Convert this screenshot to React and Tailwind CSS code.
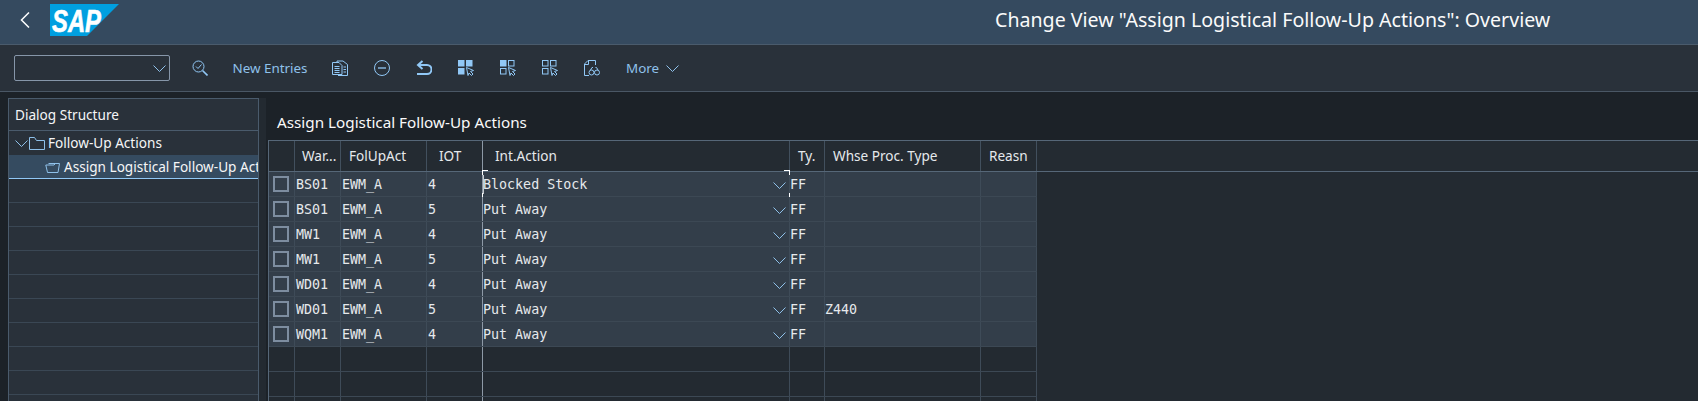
const SANS = "font-['Noto_Sans',sans-serif]"
const MONO = "font-['DejaVu_Sans_Mono',monospace]"

const COLUMNS = [
  { label: '', width: 'w-[26px]', head: 'pl-0', cell: 'pl-0', key: 'sel' },
  { label: 'War...', width: 'w-[46px]', head: 'pl-[7px]', cell: 'pl-[1px]', key: 'war' },
  { label: 'FolUpAct', width: 'w-[86px]', head: 'pl-[8px]', cell: 'pl-[1px]', key: 'act' },
  { label: 'IOT', width: 'w-[56px]', head: 'pl-[12px]', cell: 'pl-[1px]', key: 'iot' },
  { label: 'Int.Action', width: 'w-[307px]', head: 'pl-[12px]', cell: 'pl-0', key: 'action' },
  { label: 'Ty.', width: 'w-[35px]', head: 'pl-[8px]', cell: 'pl-0', key: 'ty' },
  { label: 'Whse Proc. Type', width: 'w-[156px]', head: 'pl-[8px]', cell: 'pl-0', key: 'whse' },
  { label: 'Reasn', width: 'w-[56px]', head: 'pl-[8px]', cell: 'pl-0', key: 'reason' },
]

const ROWS = [
  { war: 'BS01', act: 'EWM_A', iot: '4', action: 'Blocked Stock', ty: 'FF', whse: '', reason: '' },
  { war: 'BS01', act: 'EWM_A', iot: '5', action: 'Put Away', ty: 'FF', whse: '', reason: '' },
  { war: 'MW1', act: 'EWM_A', iot: '4', action: 'Put Away', ty: 'FF', whse: '', reason: '' },
  { war: 'MW1', act: 'EWM_A', iot: '5', action: 'Put Away', ty: 'FF', whse: '', reason: '' },
  { war: 'WD01', act: 'EWM_A', iot: '4', action: 'Put Away', ty: 'FF', whse: '', reason: '' },
  { war: 'WD01', act: 'EWM_A', iot: '5', action: 'Put Away', ty: 'FF', whse: 'Z440', reason: '' },
  { war: 'WQM1', act: 'EWM_A', iot: '4', action: 'Put Away', ty: 'FF', whse: '', reason: '' },
]

function SapLogo() {
  return (
    <svg width="69" height="32" viewBox="0 0 69 32" className="overflow-visible">
      <polygon points="0,0 69,0 37,32 0,32" fill="#009fe0" />
      <text x="2" y="28" fill="#fff" stroke="#fff" strokeWidth="0.6" fontFamily="Liberation Sans, sans-serif" fontWeight="700" fontStyle="italic" fontSize="31" textLength="49" lengthAdjust="spacingAndGlyphs">SAP</text>
    </svg>
  )
}

function Chevron({ className }) {
  return (
    <svg width="13" height="7" viewBox="0 0 13 7" fill="none" stroke="currentColor" strokeWidth="1" className={className}>
      <path d="M.5 .5l6 6 6-6" />
    </svg>
  )
}

function Cursor() {
  return <path d="M8.500 7.500l7 3-3 1 2.500 2.500-1.500 1.500-2.500-2.500-1 2.500z" fill="#29313a" stroke="currentColor" strokeWidth="1" strokeLinejoin="round" />
}

function Squares({ fills }) {
  const spots = [[0, 0], [8, 0], [0, 8]]
  return spots.map(([x, y], i) => (
    <rect key={i} x={x + 0.5} y={y + 0.5} width="5.500" height="5.500" fill={fills[i] ? 'currentColor' : 'none'} stroke="currentColor" />
  ))
}

const ICONS = {
  check: (
    <>
      <circle cx="6.500" cy="6.500" r="5.500" />
      <path d="M10.500 10.500l5 5" strokeWidth="1.600" />
      <path d="M4 6.500l2 2 3.500-4" />
    </>
  ),
  copy: (
    <>
      <path d="M5 3V1h6l4.500 3.500V15.500H6" />
      <path d="M.5 2.500h6.500l3 3V14.500H.5z" fill="#29313a" />
      <path d="M2.500 6.500h5M2.500 8.500h5M2.500 10.500h5M2.500 12.500h5M11.500 7h2.500M11.500 9.500h2.500M11.500 12h2.500" />
    </>
  ),
  minus: (
    <>
      <circle cx="8" cy="8" r="7.500" />
      <path d="M4 8h8" strokeWidth="1.300" />
    </>
  ),
  undo: (
    <>
      <path d="M6.500 1L2 5l4.500 4" strokeWidth="2" />
      <path d="M2 5h9a4 4 0 0 1 0 9H1" strokeWidth="2" />
    </>
  ),
  all: (
    <>
      <Squares fills={[1, 1, 1]} />
      <Cursor />
    </>
  ),
  block: (
    <>
      <Squares fills={[1, 0, 0]} />
      <Cursor />
    </>
  ),
  none: (
    <>
      <Squares fills={[0, 0, 0]} />
      <Cursor />
    </>
  ),
  glasses: (
    <>
      <path d="M5 15.500H.5V4L4 .5H11.500V5" />
      <path d="M.5 4.500H4.500V.5" />
      <circle cx="7.500" cy="12.500" r="2.500" />
      <circle cx="13" cy="12.500" r="2.500" />
      <path d="M10 12h.5M6.500 10l1.500-2.500h1M14 10l-1.500-2.500h-1" />
    </>
  ),
}

function ToolIcon({ name }) {
  return (
    <button className="flex h-[26px] w-[42px] items-center justify-center text-[#91c8f6]">
      <svg width="16" height="16" viewBox="0 0 16 16" fill="none" stroke="currentColor" strokeWidth="1">
        {ICONS[name]}
      </svg>
    </button>
  )
}

function Toolbar() {
  return (
    <div className={`flex h-[47px] items-center border-b border-[#4a5765] bg-[#29313a] pl-[14px] text-[13.400px] text-[#8fc1ea] ${SANS}`}>
      <div className="flex h-[26px] w-[156px] items-center justify-end rounded-[2px] border border-[#8696a9] pr-[3px]">
        <Chevron />
      </div>
      <div className="w-[9px]" />
      <ToolIcon name="check" />
      <button className="w-[98px] pt-[1px] text-center">New Entries</button>
      <ToolIcon name="copy" />
      <ToolIcon name="minus" />
      <ToolIcon name="undo" />
      <ToolIcon name="all" />
      <ToolIcon name="block" />
      <ToolIcon name="none" />
      <ToolIcon name="glasses" />
      <button className="ml-[13px] flex items-center gap-[7px] pt-[1px]">
        More
        <Chevron />
      </button>
    </div>
  )
}

function FolderIcon({ open }) {
  return (
    <svg width="16" height="13" viewBox="0 0 16 13" fill="none" stroke="#8fc1ea" strokeWidth="1" className="shrink-0">
      {open ? (
        <path d="M3.500 3.500h11l-1.500 9H2.500L.8 5H9l2-2" />
      ) : (
        <path d="M.5 12.500V.5h5l2 3h8v9z" />
      )}
    </svg>
  )
}

function TreePanel() {
  const lines = Array.from({ length: 9 })
  return (
    <div className={`w-[251px] shrink-0 overflow-hidden border-x border-t border-[#4a5b6c] bg-[#29313a] text-[13.600px] text-[#f5f6f7] ${SANS}`}>
      <div className="flex h-[32px] items-center border-b border-[#4a5b6c] pl-[6px] pt-[1px]">Dialog Structure</div>
      <div className="flex h-[24px] items-center pl-[6px]">
        <Chevron className="shrink-0 text-[#8fc1ea]" />
        <span className="w-[1px]" />
        <FolderIcon />
        <span className="ml-[3px]">Follow-Up Actions</span>
      </div>
      <div className="flex h-[24px] items-center overflow-hidden whitespace-nowrap border-b border-[#91c8f6] bg-[#354b60] pl-[36px]">
        <FolderIcon open />
        <span className="ml-[3px] pt-[1px]">Assign Logistical Follow-Up Actions</span>
      </div>
      {lines.map((_, i) => (
        <div key={i} className="h-[24px] border-b border-[#3a4754]" />
      ))}
    </div>
  )
}

function TableRow({ row, index }) {
  const bg = row ? 'bg-[#333e4a]' : 'bg-[#232a31]'
  return (
    <div className="relative flex h-[25px] w-fit border-b border-[#3c4854]">
      {COLUMNS.map((col) => (
        <div
          key={col.key}
          className={`relative flex shrink-0 items-center overflow-hidden border-r ${col.width} ${col.cell} ${bg} ${col.key === 'iot' ? 'border-[#8d99a6]' : 'border-[#3e4b58]'}`}
        >
          {row && col.key === 'sel' && <span className="ml-[4px] block size-[16px] border-2 border-[#7d8da0]" />}
          {row && col.key !== 'sel' && <span className="whitespace-pre pt-[1px]">{row[col.key]}</span>}
          {row && col.key === 'action' && (
            <Chevron className="absolute right-[3px] top-[10px] text-[#8fc1ea]" />
          )}
        </div>
      ))}
      {row && index === 0 && (
        <>
          <span className="absolute left-[213px] top-[-2px] h-[5px] w-[6px] border-l border-t border-white" />
          <span className="absolute bottom-[-2px] left-[213px] h-[5px] w-[6px] border-b border-l border-white" />
          <span className="absolute left-[214px] top-[3px] h-[19px] w-[1px] bg-[#c8ccd0]" />
          <span className="absolute left-[515px] top-[-2px] h-[5px] w-[6px] border-r border-t border-white" />
          <span className="absolute bottom-[-2px] left-[515px] h-[5px] w-[6px] border-b border-r border-white" />
        </>
      )}
    </div>
  )
}

function Table() {
  const empties = [null, null, null]
  return (
    <div className="min-h-0 flex-1 border-l border-[#566778] bg-[#232a31]">
      <div className={`flex h-[32px] border-y border-[#566778] bg-[#242b32] text-[13.600px] text-[#e6e9ec] ${SANS}`}>
        {COLUMNS.map((col) => (
          <div
            key={col.key}
            className={`flex shrink-0 items-center whitespace-nowrap border-r ${col.width} ${col.head} ${col.key === 'iot' ? 'border-[#8d99a6]' : 'border-[#42505e]'}`}
          >
            {col.label}
          </div>
        ))}
      </div>
      <div className={`text-[13.330px] text-[#e6e9ec] ${MONO}`}>
        {ROWS.map((row, i) => (
          <TableRow key={i} row={row} index={i} />
        ))}
        {empties.map((row, i) => (
          <TableRow key={i} row={row} />
        ))}
      </div>
    </div>
  )
}

export default function App() {
  return (
    <div className="flex h-[401px] w-[1698px] flex-col overflow-hidden bg-[#1c2228]">
      <header className={`flex h-[45px] shrink-0 items-center border-b border-[#4a5b6c] bg-[#354a5f] pb-[4px] text-white ${SANS}`}>
        <svg width="10" height="16" viewBox="0 0 10 16" fill="none" stroke="currentColor" strokeWidth="1.500" className="ml-[20px]">
          <path d="M9 .5L1.500 8 9 15.500" />
        </svg>
        <div className="ml-[20px]">
          <SapLogo />
        </div>
        <h1 className="ml-[876px] text-[19.600px] font-normal whitespace-nowrap text-[#fafafa]">
          Change View "Assign Logistical Follow-Up Actions": Overview
        </h1>
      </header>
      <Toolbar />
      <main className="flex min-h-0 flex-1 pl-[8px] pt-[6px]">
        <TreePanel />
        <div className="w-[7px] shrink-0 bg-[#232a31]" />
        <div className="ml-[2px] flex min-w-0 flex-1 flex-col">
          <h2 className={`flex h-[42px] shrink-0 items-center pl-[9px] pt-[6px] text-[15.250px] font-normal text-[#fafafa] ${SANS}`}>
            Assign Logistical Follow-Up Actions
          </h2>
          <Table />
        </div>
      </main>
    </div>
  )
}
